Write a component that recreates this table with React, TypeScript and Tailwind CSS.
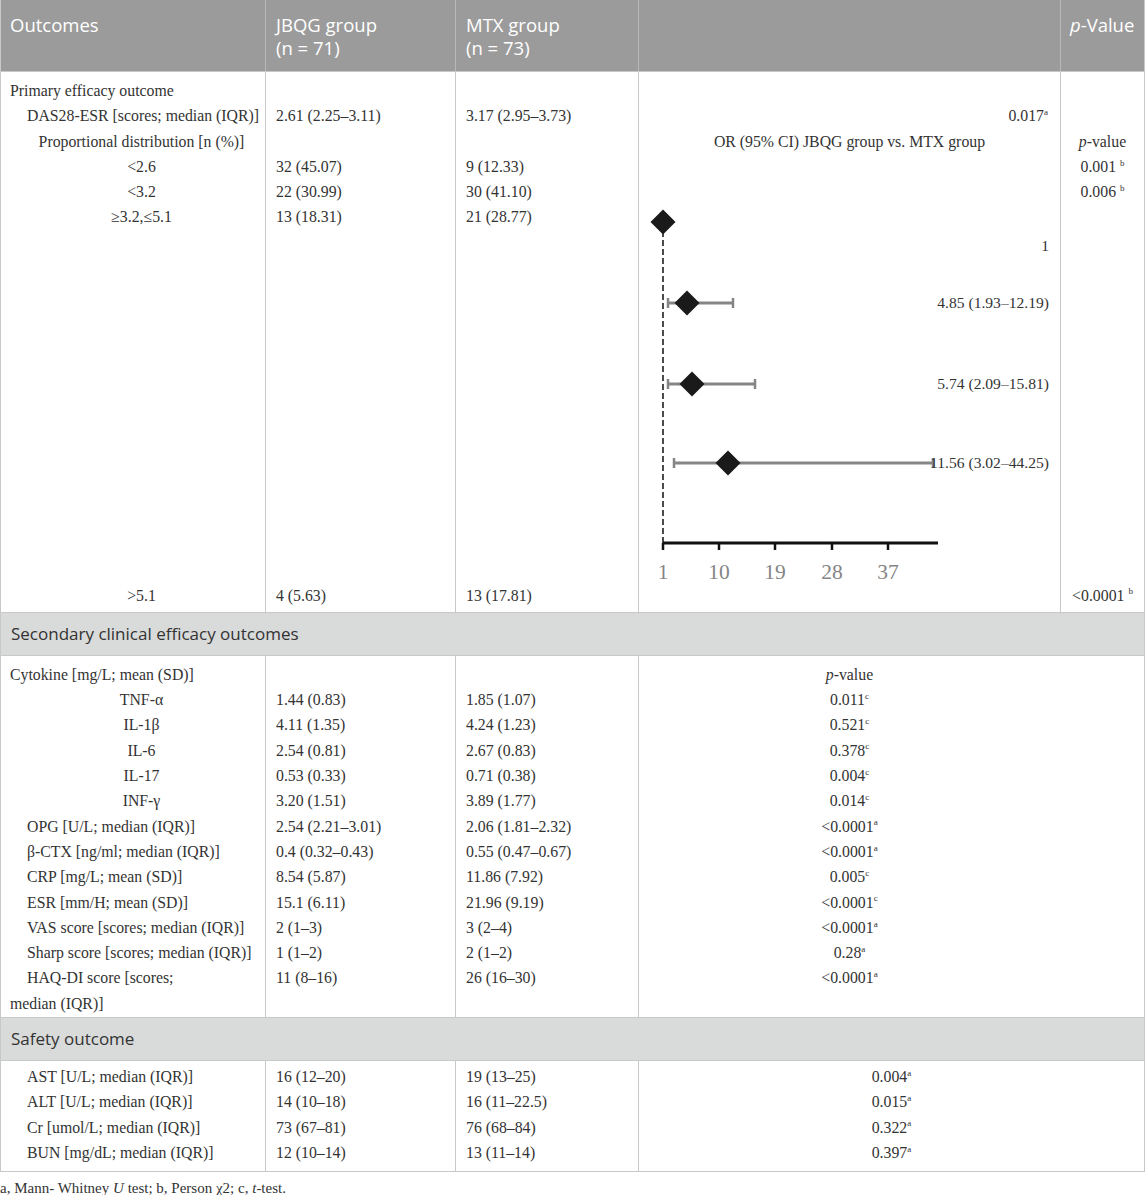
import React from "react";

const COLS = "grid grid-cols-[264px_190px_183px_422px_84px]";

function Line({ children, className = "" }: { children?: React.ReactNode; className?: string }) {
    return <div className={`h-[25.3px] leading-[25.3px] whitespace-nowrap ${className}`}>{children}</div>;
}

function Sup({ children }: { children: React.ReactNode }) {
    return <sup className="text-[9px] top-[-0.7em]">{children}</sup>;
}

function ForestPlot() {
    const ticks = [
        { x: 24, label: "1" },
        { x: 80, label: "10" },
        { x: 136, label: "19" },
        { x: 193, label: "28" },
        { x: 249, label: "37" },
    ];
    const bars = [
        { y: 149, x1: 29, x2: 94, cx: 48, label: "4.85 (1.93–12.19)" },
        { y: 230, x1: 29, x2: 116, cx: 53, label: "5.74 (2.09–15.81)" },
        { y: 309, x1: 35, x2: 294, cx: 89, label: "11.56 (3.02–44.25)" },
    ];
    const diamond = (cx: number, cy: number) =>
        `M${cx} ${cy - 12.5} L${cx + 12.5} ${cy} L${cx} ${cy + 12.5} L${cx - 12.5} ${cy} Z`;

    return (
        <svg width="422" height="458" className="absolute left-0 top-0" fontFamily="'Liberation Serif', serif">
            <line x1="24" y1="68" x2="24" y2="389" stroke="#111" strokeWidth="1.5" strokeDasharray="6 3" />
            <path d={diamond(24, 68)} fill="#1a1a1a" />
            <text x="410" y="97" textAnchor="end" fontSize="15.6" fill="#333">1</text>
            {bars.map((b) => (
                <g key={b.label}>
                    <line x1={b.x1} y1={b.y} x2={b.x2} y2={b.y} stroke="#858585" strokeWidth="3" />
                    <line x1={b.x1} y1={b.y - 5} x2={b.x1} y2={b.y + 5} stroke="#858585" strokeWidth="2.5" />
                    <line x1={b.x2} y1={b.y - 5} x2={b.x2} y2={b.y + 5} stroke="#858585" strokeWidth="2.5" />
                    <path d={diamond(b.cx, b.y)} fill="#1a1a1a" />
                    <text x="410" y={b.y + 5} textAnchor="end" fontSize="15.6" fill="#333">{b.label}</text>
                </g>
            ))}
            <line x1="24" y1="389" x2="299" y2="389" stroke="#111" strokeWidth="3" />
            {ticks.map((t) => (
                <g key={t.label}>
                    <line x1={t.x} y1="389" x2={t.x} y2="396" stroke="#111" strokeWidth="2.5" />
                    <text x={t.x} y="425" textAnchor="middle" fontSize="21.5" fill="#858585">{t.label}</text>
                </g>
            ))}
        </svg>
    );
}

const SECONDARY = [
    { name: "TNF-α", c: true, a: "1.44 (0.83)", b: "1.85 (1.07)", p: "0.011", s: "c" },
    { name: "IL-1β", c: true, a: "4.11 (1.35)", b: "4.24 (1.23)", p: "0.521", s: "c" },
    { name: "IL-6", c: true, a: "2.54 (0.81)", b: "2.67 (0.83)", p: "0.378", s: "c" },
    { name: "IL-17", c: true, a: "0.53 (0.33)", b: "0.71 (0.38)", p: "0.004", s: "c" },
    { name: "INF-γ", c: true, a: "3.20 (1.51)", b: "3.89 (1.77)", p: "0.014", s: "c" },
    { name: "OPG [U/L; median (IQR)]", a: "2.54 (2.21–3.01)", b: "2.06 (1.81–2.32)", p: "<0.0001", s: "a" },
    { name: "β-CTX [ng/ml; median (IQR)]", a: "0.4 (0.32–0.43)", b: "0.55 (0.47–0.67)", p: "<0.0001", s: "a" },
    { name: "CRP [mg/L; mean (SD)]", a: "8.54 (5.87)", b: "11.86 (7.92)", p: "0.005", s: "c" },
    { name: "ESR [mm/H; mean (SD)]", a: "15.1 (6.11)", b: "21.96 (9.19)", p: "<0.0001", s: "c" },
    { name: "VAS score [scores; median (IQR)]", a: "2 (1–3)", b: "3 (2–4)", p: "<0.0001", s: "a" },
    { name: "Sharp score [scores; median (IQR)]", a: "1 (1–2)", b: "2 (1–2)", p: "0.28", s: "a" },
];

const SAFETY = [
    { name: "AST [U/L; median (IQR)]", a: "16 (12–20)", b: "19 (13–25)", p: "0.004" },
    { name: "ALT [U/L; median (IQR)]", a: "14 (10–18)", b: "16 (11–22.5)", p: "0.015" },
    { name: "Cr [umol/L; median (IQR)]", a: "73 (67–81)", b: "76 (68–84)", p: "0.322" },
    { name: "BUN [mg/dL; median (IQR)]", a: "12 (10–14)", b: "13 (11–14)", p: "0.397" },
];

export default function App() {
    return (
        <div className="w-[1145px] bg-white font-['Liberation_Serif',serif] text-[15.8px] text-[#333]">
            <div className="border border-[#c8c8c8] border-t-0">
                {/* header */}
                <div className={`${COLS} bg-[#9b9b9b] text-white font-['Open_Sans',sans-serif] text-[18.5px] leading-[23px]`}>
                    <div className="h-[71px] pl-[9px] pt-[13px]">Outcomes</div>
                    <div className="border-l border-[#b8b8b8] pl-[10px] pt-[13px]">JBQG group<br />(n = 71)</div>
                    <div className="border-l border-[#b8b8b8] pl-[10px] pt-[13px]">MTX group<br />(n = 73)</div>
                    <div className="border-l border-[#b8b8b8]" />
                    <div className="border-l border-[#b8b8b8] pl-[9px] pt-[13px]"><i>p</i>-Value</div>
                </div>

                {/* primary block */}
                <div className={`${COLS} border-t border-[#c8c8c8]`}>
                    <div className="flex flex-col justify-between pt-[6px] pb-[4px]">
                        <div>
                            <Line className="pl-[9px]">Primary efficacy outcome</Line>
                            <Line className="pl-[26px]">DAS28-ESR [scores; median (IQR)]</Line>
                            <Line className="pl-[17px] text-center">Proportional distribution [n (%)]</Line>
                            <Line className="pl-[17px] text-center">&lt;2.6</Line>
                            <Line className="pl-[17px] text-center">&lt;3.2</Line>
                            <Line className="pl-[17px] text-center">≥3.2,≤5.1</Line>
                        </div>
                        <Line className="pl-[17px] text-center">&gt;5.1</Line>
                    </div>
                    <div className="border-l border-[#c8c8c8] pl-[10px] flex flex-col justify-between pt-[6px] pb-[4px]">
                        <div>
                            <Line />
                            <Line>2.61 (2.25–3.11)</Line>
                            <Line />
                            <Line>32 (45.07)</Line>
                            <Line>22 (30.99)</Line>
                            <Line>13 (18.31)</Line>
                        </div>
                        <Line>4 (5.63)</Line>
                    </div>
                    <div className="border-l border-[#c8c8c8] pl-[10px] flex flex-col justify-between pt-[6px] pb-[4px]">
                        <div>
                            <Line />
                            <Line>3.17 (2.95–3.73)</Line>
                            <Line />
                            <Line>9 (12.33)</Line>
                            <Line>30 (41.10)</Line>
                            <Line>21 (28.77)</Line>
                        </div>
                        <Line>13 (17.81)</Line>
                    </div>
                    <div className="border-l border-[#c8c8c8] pt-[6px]">
                        <Line />
                        <Line className="text-right pr-[12px]">0.017<Sup>a</Sup></Line>
                        <Line className="text-center">OR (95% CI) JBQG group vs. MTX group</Line>
                        <div className="relative h-[458px]">
                            <ForestPlot />
                        </div>
                    </div>
                    <div className="border-l border-[#c8c8c8] flex flex-col justify-between pt-[6px] pb-[4px] text-center">
                        <div>
                            <Line />
                            <Line />
                            <Line><i>p</i>-value</Line>
                            <Line>0.001 <Sup>b</Sup></Line>
                            <Line>0.006 <Sup>b</Sup></Line>
                        </div>
                        <Line>&lt;0.0001 <Sup>b</Sup></Line>
                    </div>
                </div>

                {/* secondary band */}
                <div className="h-[43px] border-t border-[#c8c8c8] bg-[#d9dada] pl-[10px] flex items-center font-['Open_Sans',sans-serif] text-[17px]">
                    Secondary clinical efficacy outcomes
                </div>

                <div className={`${COLS} border-t border-[#c8c8c8] pt-[6px] pb-[1px]`}>
                    <div>
                        <Line className="pl-[9px]">Cytokine [mg/L; mean (SD)]</Line>
                        {SECONDARY.map((r) => (
                            <Line key={r.name} className={r.c ? "pl-[17px] text-center" : "pl-[26px]"}>{r.name}</Line>
                        ))}
                        <Line className="pl-[26px]">HAQ-DI score [scores;</Line>
                        <Line className="pl-[9px]">median (IQR)]</Line>
                    </div>
                    <div className="border-l border-[#c8c8c8] pl-[10px] -mt-[6px] pt-[6px] -mb-[1px]">
                        <Line />
                        {SECONDARY.map((r) => <Line key={r.name}>{r.a}</Line>)}
                        <Line>11 (8–16)</Line>
                    </div>
                    <div className="border-l border-[#c8c8c8] pl-[10px] -mt-[6px] pt-[6px] -mb-[1px]">
                        <Line />
                        {SECONDARY.map((r) => <Line key={r.name}>{r.b}</Line>)}
                        <Line>26 (16–30)</Line>
                    </div>
                    <div className="border-l border-[#c8c8c8] text-center -mt-[6px] pt-[6px] -mb-[1px]">
                        <Line><i>p</i>-value</Line>
                        {SECONDARY.map((r) => <Line key={r.name}>{r.p}<Sup>{r.s}</Sup></Line>)}
                        <Line>&lt;0.0001<Sup>a</Sup></Line>
                    </div>
                    <div />
                </div>

                {/* safety band */}
                <div className="h-[43px] border-t border-[#c8c8c8] bg-[#d9dada] pl-[10px] flex items-center font-['Open_Sans',sans-serif] text-[17px]">
                    Safety outcome
                </div>

                <div className={`${COLS} border-t border-[#c8c8c8]`}>
                    <div className="pt-[3px] pb-[6px]">
                        {SAFETY.map((r) => <Line key={r.name} className="pl-[26px]">{r.name}</Line>)}
                    </div>
                    <div className="border-l border-[#c8c8c8] pl-[10px] pt-[3px]">
                        {SAFETY.map((r) => <Line key={r.name}>{r.a}</Line>)}
                    </div>
                    <div className="border-l border-[#c8c8c8] pl-[10px] pt-[3px]">
                        {SAFETY.map((r) => <Line key={r.name}>{r.b}</Line>)}
                    </div>
                    <div className="col-span-2 border-l border-[#c8c8c8] pt-[3px] text-center">
                        {SAFETY.map((r) => <Line key={r.name}>{r.p}<Sup>a</Sup></Line>)}
                    </div>
                </div>
            </div>
            <div className="mt-[6px] leading-[20px] text-[15px]">
                a, Mann- Whitney <i>U</i> test; b, Person χ2; c, <i>t</i>-test.
            </div>
        </div>
    );
}
